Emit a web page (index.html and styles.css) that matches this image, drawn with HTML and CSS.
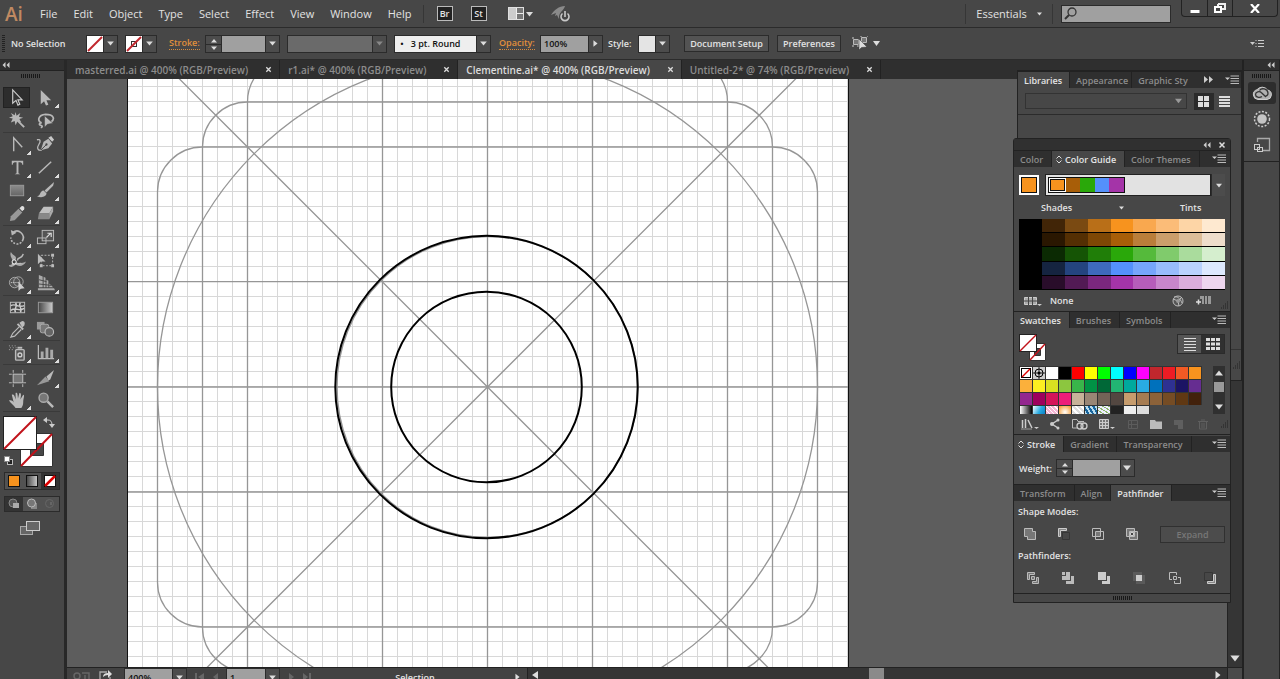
FILE: index.html
```html
<!DOCTYPE html>
<html lang="en">
<head>
<meta charset="utf-8">
<title>Clementine.ai</title>
<link rel="stylesheet" href="styles.css">
</head>
<body>
<svg class="defs" aria-hidden="true">
  <defs>
    <linearGradient id="gr" x1="0" x2="1"><stop offset="0" stop-color="#444"/><stop offset="1" stop-color="#ccc"/></linearGradient>
    <linearGradient id="gv" x1="0" x2="0" y1="0" y2="1"><stop offset="0" stop-color="#8c8c8c"/><stop offset="1" stop-color="#666"/></linearGradient>
    <pattern id="cells" width="15" height="15" patternUnits="userSpaceOnUse" x="127" y="86"><path d="M0 .5H15M.5 0V15" stroke="#d8d8d8" fill="none"/></pattern>
    <symbol id="down" viewBox="0 0 8 6"><path d="M0 .5h8L4 5.5z" fill="currentColor"/></symbol>
    <symbol id="right" viewBox="0 0 6 8"><path d="M.5 0v8L5.5 4z" fill="currentColor"/></symbol>
    <symbol id="spin" viewBox="0 0 16 17"><path d="M5 6.500h6L8 3zM5 10.500h6L8 14z" fill="#ddd"/><path d="M0 8.500h16" stroke="#2b2b2b"/></symbol>
    <symbol id="close" viewBox="0 0 8 8"><path d="M1.500 1.500l5 5M6.500 1.500l-5 5" stroke="#ddd" stroke-width="1.500"/></symbol>
    <symbol id="chev" viewBox="0 0 8 6"><path d="M3.500 0v6L.5 3zM7.500 0v6L4.500 3z" fill="#ccc"/></symbol>
    <symbol id="menu" viewBox="0 0 14 9"><path d="M0 2.500h5L2.500 5z" fill="#ccc"/><path d="M5.500 1H14M5.500 3.500H14M5.500 6H14M5.500 8.500H14" stroke="#bbb"/></symbol>
    <symbol id="updown" viewBox="0 0 6 9"><path d="M.5 3.500L3 1l2.500 2.500M.5 5.500L3 8l2.500-2.500" stroke="#ddd" fill="none"/></symbol>
    <symbol id="grip" viewBox="0 0 19 4"><path d="M.5 0v4M2.500 0v4M4.500 0v4M6.500 0v4M8.500 0v4M10.500 0v4M12.500 0v4M14.500 0v4M16.500 0v4M18.500 0v4" stroke="#181818"/></symbol>
    <symbol id="corner" viewBox="0 0 9 9"><path d="M7 1h1M5 3h1M7 3h1M3 5h1M5 5h1M7 5h1M1 7h1M3 7h1M5 7h1M7 7h1" stroke="#222"/></symbol>
  </defs>
</svg>

<div class="app">
  <header class="menubar">
    <div class="logo">Ai</div>
    <nav class="menus">
      <button>File</button><button>Edit</button><button>Object</button><button>Type</button><button>Select</button><button>Effect</button><button>View</button><button>Window</button><button>Help</button>
    </nav>
    <div class="apps">
      <button class="appbtn">Br</button>
      <button class="appbtn">St</button>
      <button class="plain arrange" aria-label="Arrange documents"><svg width="25" height="14" viewBox="0 0 25 14"><rect x=".5" y=".5" width="15" height="12" fill="#777" stroke="#e0e0e0"/><rect x="1" y="1" width="7" height="11" fill="#ccc"/><path d="M8.500 1v11M8.500 6.500H15" stroke="#eee"/><path d="M18 5h7l-3.500 4.500z" fill="#ddd"/></svg></button>
      <button class="plain" aria-label="GPU performance"><svg width="20" height="18" viewBox="0 0 20 18"><path d="M0 10C3 5 8 1 14 1c-.5 2-2 4-4 6l-2 7-2-4-2 1 1-3z" fill="#8a8a8a"/><path d="M11.500 8.500a4 4 0 1 0 5 0M14 6v6" fill="none" stroke="#474747" stroke-width="4"/><path d="M11.500 8.500a4 4 0 1 0 5 0M14 6v6" fill="none" stroke="#c8c8c8" stroke-width="1.600"/></svg></button>
    </div>
    <button class="workspace-switch">Essentials <svg width="5" height="4"><use href="#down"/></svg></button>
    <label class="search"><svg width="13" height="13" viewBox="0 0 13 13"><circle cx="8" cy="5" r="4" fill="none" stroke="#333" stroke-width="1.300"/><path d="M5 8L1 12" stroke="#333" stroke-width="2"/></svg><input type="search" aria-label="Search"></label>
    <div class="winbtns">
      <button aria-label="Minimize"><svg width="10" height="12" viewBox="0 0 10 12"><rect x=".5" y="8" width="9" height="3" fill="#fff"/></svg></button>
      <button aria-label="Restore"><svg width="12" height="10" viewBox="0 0 12 10"><path d="M4 1h7v5H8M4 1v2" fill="none" stroke="#eee" stroke-width="2"/><rect x="1" y="4" width="6" height="5" fill="#444" stroke="#fff" stroke-width="2"/></svg></button>
      <button aria-label="Close"><svg width="10" height="9" viewBox="0 0 10 9"><path d="M1 0l8 9M9 0L1 9" stroke="#fff" stroke-width="2.200"/></svg></button>
    </div>
  </header>

  <div class="control">
    <span class="vgrip"></span>
    <span class="sel-label">No Selection</span>
    <div class="pair first"><button class="chip" aria-label="Fill"><svg viewBox="0 0 16 16"><path d="M1 15L15 1" stroke="#c1272d" stroke-width="2"/></svg></button><span class="arrow"><svg width="7" height="5"><use href="#down"/></svg></span></div>
    <div class="pair"><button class="chip" aria-label="Stroke colour"><svg viewBox="0 0 16 16"><rect x="5.500" y="5.500" width="5" height="5" fill="#fff" stroke="#333"/><path d="M1 15L15 1" stroke="#c1272d" stroke-width="2"/></svg></button><span class="arrow"><svg width="7" height="5"><use href="#down"/></svg></span></div>
    <label class="link w-stroke" for="sw">Stroke:</label>
    <div class="pair tight"><span class="spin"><svg width="16" height="17"><use href="#spin"/></svg></span><input id="sw" class="f43"><span class="arrow"><svg width="7" height="5"><use href="#down"/></svg></span></div>
    <div class="pair dim"><select class="f84" aria-label="Width profile"><option></option></select><span class="arrow"><svg width="7" height="5"><use href="#down"/></svg></span></div>
    <div class="pair"><select class="f81 white" aria-label="Brush"><option>&nbsp;•&nbsp;&nbsp;&nbsp;3 pt. Round</option></select><span class="arrow"><svg width="7" height="5"><use href="#down"/></svg></span></div>
    <label class="link w-opac" for="op">Opacity:</label>
    <div class="pair tight"><input id="op" class="f47" value="100%"><span class="arrow"><svg width="5" height="7"><use href="#right"/></svg></span></div>
    <span class="w-style">Style:</span>
    <div class="pair tight"><button class="chip grey" aria-label="Style"></button><span class="arrow"><svg width="7" height="5"><use href="#down"/></svg></span></div>
    <button class="push b84">Document Setup</button>
    <button class="push b64">Preferences</button>
    <button class="plain similar" aria-label="Select similar"><svg width="28" height="15" viewBox="0 0 28 15"><path d="M1.500 3.500h5v5h-5zM9.500 1.500h5v5h-5z" fill="#777" stroke="#bbb"/><path d="M0 2h2M0 10h2M8 0h2M15 0h1M5 10h2" stroke="#ccc"/><path d="M7 3v11l2.500-2.500L15 11z" fill="#ddd" stroke="#333" stroke-width=".5"/><path d="M21 5h7l-3.500 5z" fill="#ddd"/></svg></button>
    <button class="plain end" aria-label="Panel options"><svg width="14" height="9" viewBox="0 0 14 9"><path d="M0 3h5L2.500 6z" fill="#ccc"/><path d="M5.500 1.500h1M8 1.500h6M5.500 4.500h1M8 4.500h6M5.500 7.500h1M8 7.500h6" stroke="#ccc"/></svg></button>
  </div>

  <main class="main">
    <aside class="tools">
      <div class="bar"><svg width="8" height="6"><use href="#chev"/></svg></div>
      <svg class="grip" width="19" height="4"><use href="#grip"/></svg>
      <div class="tg">
        <button class="on" aria-label="Selection"><svg viewBox="0 0 20 20"><path d="M6 2v14l3.500-3 2 5 2-1-2-4.500H16z" fill="#333" stroke="#ccc" stroke-width="1.200"/></svg></button>
        <button class="fly" aria-label="Direct selection"><svg viewBox="0 0 20 20"><path d="M5 2v15l3.500-3 2 4.500 2.500-1-2-4.500h5z" fill="#b8b8b8"/></svg></button>
        <button aria-label="Magic wand"><svg viewBox="0 0 20 20"><path d="M8 1l1 4 4-3-1.500 4L16 7l-4 1.500 2 3.500-4-1.500L8 15l-1-4.500L3 12l2-4-4-1 4-1.500L3 2l4 2.500z" fill="#b8b8b8"/><path d="M9 9l8 8" stroke="#b8b8b8" stroke-width="2"/></svg></button>
        <button aria-label="Lasso"><svg viewBox="0 0 20 20"><path d="M6 12.500C1 11 2 4 10 3.500c9 0 10 5 6 8M6 12.500c-3 0-3 2-1 2.500s2 2 0 2.500" fill="none" stroke="#b8b8b8" stroke-width="1.800"/><path d="M9 5v12l3-3 6-1z" fill="#bbb" stroke="#474747" stroke-width=".6"/></svg></button>
      </div>
      <div class="tg">
        <button class="fly" aria-label="Anchor point"><svg viewBox="0 0 20 20"><path d="M6 17V3l9 10" fill="none" stroke="#b8b8b8" stroke-width="1.500"/></svg></button>
        <button aria-label="Curvature pen"><svg viewBox="0 0 20 20"><path d="M1 5c4-1 4 2 2 5s-2 7 3 6" fill="none" stroke="#b8b8b8" stroke-width="1.400"/><path d="M5 16l3-9 5-3 4 5-4 5z" fill="#b8b8b8"/><path d="M13 3l3-2 3 4-2 2z" fill="#c8c8c8"/><path d="M5 16l6-6" stroke="#444"/><circle cx="11" cy="10" r="1.200" fill="#444"/></svg></button>
        <button class="fly" aria-label="Type"><svg viewBox="0 0 20 20"><path d="M4 3h12v4h-1c0-2-1-2.500-4-2.500V16l2 1H7l2-1V4.500C6 4.500 5 5 5 7H4z" fill="#b8b8b8"/></svg></button>
        <button class="fly" aria-label="Line segment"><svg viewBox="0 0 20 20"><path d="M3 16L16 4" stroke="#b8b8b8" stroke-width="1.600"/></svg></button>
        <button class="fly" aria-label="Rectangle"><svg viewBox="0 0 20 20"><rect x="2.500" y="4.500" width="14" height="11" fill="url(#gv)" stroke="#999"/></svg></button>
        <button class="fly" aria-label="Paintbrush"><svg viewBox="0 0 20 20"><path d="M19 1l-1 4-7 7-2-2z" fill="#b8b8b8"/><path d="M8 10l3 3c0 4-6 5-10 3 4 0 3-6 7-6z" fill="#b8b8b8"/></svg></button>
        <button class="fly" aria-label="Pencil"><svg viewBox="0 0 20 20"><path d="M2 18l1-5 8-8 4 4-8 8z" fill="#999"/><path d="M12 4.500l2-2c2-1 4 1 3 3l-2 2z" fill="#ddd"/></svg></button>
        <button class="fly" aria-label="Eraser"><svg viewBox="0 0 20 20"><path d="M8 3h10l-4 7H3z" fill="#c0c0c0"/><path d="M3 10h11v6H2z" fill="#888"/><path d="M14 10l4-7v5l-4 8z" fill="#aaa"/></svg></button>
      </div>
      <div class="tg">
        <button class="fly" aria-label="Rotate"><svg viewBox="0 0 20 20"><path d="M5 5c6-5 14 2 10 9" fill="none" stroke="#b8b8b8" stroke-width="1.700"/><path d="M14 15c-4 4-11 1-11-5" fill="none" stroke="#b8b8b8" stroke-width="1.700" stroke-dasharray="2 1.500"/><path d="M3 2l1 6 5-3z" fill="#b8b8b8"/></svg></button>
        <button class="fly" aria-label="Scale"><svg viewBox="0 0 20 20"><rect x="6.500" y="2.500" width="12" height="11" fill="#555" stroke="#bbb"/><rect x="1.500" y="10.500" width="9" height="6" fill="none" stroke="#bbb"/><path d="M11 10l4-4M12 5.500h4v4" fill="none" stroke="#ddd" stroke-width="1.200"/></svg></button>
        <button class="fly" aria-label="Width"><svg viewBox="0 0 20 20"><path d="M3 1c2 4 7 4 5 8s6 5 11 2c-2 5-8 6-11 3-3 4-7 3-7 1 2-1 3 0 4-3S1 6 3 1z" fill="#aaa"/><path d="M10 10c0-5 4 0 6-7M4 14l10-1" fill="none" stroke="#bbb" stroke-width="1.500"/><circle cx="6.500" cy="11.500" r="2.200" fill="#444" stroke="#fff"/></svg></button>
        <button aria-label="Free transform"><svg viewBox="0 0 20 20"><rect x="5.500" y="4.500" width="12" height="11" fill="none" stroke="#bbb" stroke-dasharray="2 1.500"/><path d="M2 3v11l3-3h5z" fill="#bbb"/><path d="M4 14h3v3H4zM16 3h3v3h-3zM16 14h3v3h-3z" fill="#bbb"/></svg></button>
        <button class="fly" aria-label="Shape builder"><svg viewBox="0 0 20 20"><circle cx="7" cy="9" r="5.500" fill="#555" stroke="#aaa"/><circle cx="11" cy="8" r="5" fill="none" stroke="#aaa"/><path d="M3 9h10" stroke="#ddd" stroke-dasharray="1 1"/><path d="M11 8v10l2.500-2.500 4-.5z" fill="#ccc"/></svg></button>
        <button class="fly" aria-label="Perspective grid"><svg viewBox="0 0 20 20"><path d="M3 1l4 1.500V14H3zM8 3l2 1v10H8zM11 6l2 1v7h-2zM14 10l4 4h-4zM2 15h17l1 2H2z" fill="#aaa"/><path d="M3 6l8 2M3 10.500l13 1.500" stroke="#474747"/></svg></button>
      </div>
      <div class="tg short">
        <button aria-label="Mesh"><svg viewBox="0 0 20 20"><rect x="2.500" y="4.500" width="15" height="11" fill="none" stroke="#bbb"/><path d="M3 8c5-3 8 3 14 0M3 13c6-4 8 2 14-2M8 5c3 4-3 7 0 10M13 5c-3 4 3 6 0 10" fill="none" stroke="#ccc" stroke-width="1.500"/></svg></button>
        <button aria-label="Gradient"><svg viewBox="0 0 20 20"><rect x="2.500" y="4.500" width="15" height="11" fill="url(#gr)" stroke="#999"/></svg></button>
        <button class="fly" aria-label="Eyedropper"><svg viewBox="0 0 20 20"><path d="M12 3l3-2c3 0 3 3 2 5l-2 2z" fill="#bbb"/><path d="M10 4l6 6" stroke="#bbb" stroke-width="2"/><path d="M12 7l-7 7-2 4 4-1 7-7" fill="none" stroke="#bbb" stroke-width="1.200"/></svg></button>
        <button aria-label="Blend"><svg viewBox="0 0 20 20"><rect x="1" y="2" width="8" height="8" fill="#999"/><rect x="4.500" y="4.500" width="9" height="9" rx="2" fill="#777" stroke="#aaa"/><circle cx="14" cy="12.500" r="4.500" fill="#666" stroke="#bbb" stroke-width="1.200"/></svg></button>
      </div>
      <div class="tg">
        <button class="fly" aria-label="Symbol sprayer"><svg viewBox="0 0 20 20"><rect x="8" y="7" width="9" height="11" rx="1" fill="#555" stroke="#bbb" stroke-width="1.500"/><path d="M10 4h5v2h-5z" fill="#bbb"/><circle cx="12.500" cy="12.500" r="2" fill="none" stroke="#ccc" stroke-width="1.500"/><path d="M1 3h1M4 3h1M7 3h1M2 5h1M5 5h1M8 5h1M1 7h1M4 7h1" stroke="#aaa"/></svg></button>
        <button class="fly" aria-label="Column graph"><svg viewBox="0 0 20 20"><path d="M2.500 2v14.500H19" fill="none" stroke="#bbb" stroke-width="1.300"/><path d="M5 9h3v7H5zM10 5h3v11h-3zM15 7h3v9h-3z" fill="#aaa"/></svg></button>
      </div>
      <div class="tg short last">
        <button aria-label="Artboard"><svg viewBox="0 0 20 20"><rect x="5" y="5" width="11" height="10" fill="#777"/><path d="M1 5.500h18M1 14.500h18M5.500 1v18M15.500 1v18" stroke="#bbb" stroke-dasharray="3 1 10 1 3"/></svg></button>
        <button class="fly" aria-label="Slice"><svg viewBox="0 0 20 20"><path d="M11 8l8-7-4 10-2 1z" fill="#bbb"/><path d="M1 17l9-9 4 5z" fill="#999"/></svg></button>
        <button class="fly" aria-label="Hand"><svg viewBox="0 0 20 20"><path d="M8 18c-2-3-5-5-7-8 2-1 4 0 5 2L4 4c2-1 3 1 4 5V2c2-1 2 1 2.500 6L12 2c2 0 2 2 1 7l3-5c2 0 0 4 0 8 0 3-1 4-2 6z" fill="#bbb"/></svg></button>
        <button aria-label="Zoom"><svg viewBox="0 0 20 20"><circle cx="8" cy="7" r="4.800" fill="#777" stroke="#aaa" stroke-width="1.500"/><path d="M12 11l6 6" stroke="#bbb" stroke-width="2.500"/></svg></button>
      </div>
      <svg class="fillstroke" width="56" height="54" viewBox="0 0 56 54"><path d="M17.500 19.500h32v33h-32zM27.500 29.500v12h13v-12z" fill="#fff" fill-rule="evenodd" stroke="#333"/><path d="M18 52L49 20" stroke="#c1121a" stroke-width="2"/><rect x=".5" y="2.500" width="33" height="33" fill="#fff" stroke="#222"/><path d="M1 35L33 3" stroke="#c1121a" stroke-width="2"/><path d="M43 6h2q4 0 4 5" fill="none" stroke="#ccc"/><path d="M44 3v6l-4-3zM46 10h6l-3 4z" fill="#ccc"/><rect x="4.500" y="45.500" width="5" height="5" fill="#222" stroke="#bbb"/><rect x="1.500" y="42.500" width="5" height="5" fill="#fff" stroke="#888"/></svg>
      <div class="modes tall">
        <button aria-label="Color"><svg viewBox="0 0 14 14"><rect x="1.500" y="1.500" width="11" height="11" fill="#f7931e" stroke="#111"/></svg></button>
        <button aria-label="Gradient fill"><svg viewBox="0 0 14 14"><rect x="1.500" y="1.500" width="11" height="11" fill="url(#gr)" stroke="#111"/></svg></button>
        <button class="on" aria-label="None"><svg viewBox="0 0 14 14"><rect x="1.500" y="1.500" width="11" height="11" fill="#fff" stroke="#111"/><path d="M2 12L12 2" stroke="#d00" stroke-width="2.500"/></svg></button>
      </div>
      <div class="modes">
        <button class="on" aria-label="Draw normal"><svg viewBox="0 0 14 14"><circle cx="6" cy="6" r="4" fill="#555" stroke="#888"/><rect x="6" y="6" width="6" height="5" fill="#aaa"/></svg></button>
        <button aria-label="Draw behind"><svg viewBox="0 0 14 14"><rect x="6" y="6" width="6" height="6" fill="#888"/><circle cx="6.500" cy="6" r="4" fill="#777" stroke="#bbb"/></svg></button>
        <button aria-label="Draw inside"><svg viewBox="0 0 14 14"><circle cx="6.500" cy="6.500" r="4" fill="none" stroke="#666"/><path d="M7 5h2v3H7z" fill="#666"/></svg></button>
      </div>
      <button class="plain screenmode" aria-label="Screen mode"><svg width="20" height="16" viewBox="0 0 20 16"><rect x=".5" y="6.500" width="12" height="8" fill="#666" stroke="#aaa"/><rect x="6.500" y="1.500" width="13" height="9" fill="#666" stroke="#ccc"/></svg></button>
    </aside>

    <section class="work">
      <div class="doctabs">
        <div class="doc"><button>masterred.ai @ 400% (RGB/Preview)</button><button class="x" aria-label="Close masterred.ai"><svg width="7" height="7"><use href="#close"/></svg></button></div>
        <div class="doc"><button>r1.ai* @ 400% (RGB/Preview)</button><button class="x" aria-label="Close r1.ai"><svg width="7" height="7"><use href="#close"/></svg></button></div>
        <div class="doc on"><button>Clementine.ai* @ 400% (RGB/Preview)</button><button class="x" aria-label="Close Clementine.ai"><svg width="7" height="7"><use href="#close"/></svg></button></div>
        <div class="doc"><button>Untitled-2* @ 74% (RGB/Preview)</button><button class="x" aria-label="Close Untitled-2"><svg width="7" height="7"><use href="#close"/></svg></button></div>
      </div>
      <div class="view">
        <svg class="canvas" aria-label="Artboard">
          <g transform="translate(-67 -79)">
            <rect x="127" y="-200" width="721.500" height="1180" fill="#fff"/>
            <rect x="128" y="-200" width="720" height="1180" fill="url(#cells)"/>
            <g fill="none" stroke="#969696" stroke-width="1.300">
              <path d="M128 281.700H848M128 387H848M128 492H848M382.500 0V900M487.500 0V900M592.500 0V900"/>
              <path d="M87.500 -13L887.500 787M887.500 -13L87.500 787"/>
              <rect x="157.500" y="147" width="660" height="480" rx="45"/>
              <rect x="202.500" y="102" width="570" height="570" rx="45"/>
              <rect x="247.500" y="57" width="480" height="660" rx="45"/>
              <circle cx="487.500" cy="387" r="330"/>
              <circle cx="487.500" cy="387" r="150.500"/>
            </g>
            <path d="M127.500 0V900M848.500 0V900" stroke="#111"/>
            <g fill="none" stroke="#000" stroke-width="2">
              <circle cx="486.500" cy="387" r="151.200"/>
              <circle cx="486.500" cy="387" r="95.300"/>
            </g>
          </g>
        </svg>
        <div class="vscroll"><svg width="10" height="7"><use href="#down"/></svg></div>
      </div>
      <div class="status">
        <div class="statusbox">
          <svg class="si" width="42" height="12" viewBox="0 0 42 12"><circle cx="4" cy="8" r="3" fill="none" stroke="#666" stroke-width="1.500"/><path d="M9 5h7v6M12 7v4" fill="none" stroke="#666" stroke-width="1.500"/><path d="M34 4h-7v8h10V9" fill="none" stroke="#aaa" stroke-width="1.300"/><path d="M30 9q0-4 5-4V2l4 4-4 4V7q-3 0-5 2z" fill="#ddd"/></svg>
          <div class="pair"><input class="f47" value="400%" aria-label="Zoom level"><span class="arrow"><svg width="7" height="5"><use href="#down"/></svg></span></div>
          <svg class="nav" width="26" height="8" viewBox="0 0 26 8"><path d="M1 0h2v8H1zM10 0v8L4 4zM24 0v8l-5-4z" fill="#666"/></svg>
          <div class="pair"><input class="f38" value="1" aria-label="Artboard number"><span class="arrow"><svg width="7" height="5"><use href="#down"/></svg></span></div>
          <svg class="nav" width="26" height="8" viewBox="0 0 26 8"><path d="M2 0v8l5-4zM16 0v8l5-4zM22 0h2v8h-2z" fill="#666"/></svg>
          <span class="statustext">Selection</span>
          <span class="more"><svg width="5" height="8"><use href="#right"/></svg></span>
        </div>
        <div class="hscroll"><svg width="6" height="8" viewBox="0 0 6 8"><path d="M6 0v8L0 4z" fill="#ddd"/></svg><span class="thumb"></span><svg width="6" height="8"><use href="#right"/></svg></div>
        <span class="sizebox"></span>
      </div>

      <section class="panel libraries">
        <div class="tabs">
          <button class="on">Libraries</button><button>Appearance</button><button class="last">Graphic Sty</button>
          <svg class="more2" width="9" height="7" viewBox="0 0 9 7"><path d="M0 0v7l4-3.500zM5 0v7l4-3.500z" fill="#ccc"/></svg><svg class="pm" width="14" height="9"><use href="#menu"/></svg>
        </div>
        <div class="librow">
          <div class="pair libsel"><select aria-label="Library"><option></option></select><span class="noarrow"><svg width="7" height="6"><use href="#down"/></svg></span></div>
          <button class="view-b on" aria-label="Grid view"><svg width="12" height="11" viewBox="0 0 12 11"><path d="M0 0h5v5H0zM6 0h5v5H6zM0 6h5v5H0zM6 6h5v5H6z" fill="#ddd"/></svg></button>
          <button class="view-b" aria-label="List view"><svg width="11" height="11" viewBox="0 0 11 11"><path d="M0 1h11M0 4h11M0 7h11M0 10h11" stroke="#ddd" stroke-width="2"/></svg></button>
        </div>
        <div class="libfoot"><svg width="9" height="9"><use href="#corner"/></svg></div>
      </section>

      <section class="panel float">
        <div class="titlebar"><svg width="8" height="6"><use href="#chev"/></svg><button class="x" aria-label="Close panels"><svg width="8" height="8"><use href="#close"/></svg></button></div>
        <div class="tabs"><button>Color</button><button class="on ud"><svg width="6" height="9"><use href="#updown"/></svg>Color Guide</button><button>Color Themes</button><svg class="pm" width="14" height="9"><use href="#menu"/></svg></div>
        <div class="guide">
          <div class="harmony">
            <button class="base" aria-label="Base colour"></button>
            <div class="rule"><div class="rulecolors" id="rule"></div></div>
            <span class="arrow"><svg width="6" height="5"><use href="#down"/></svg></span>
          </div>
          <div class="caps"><span>Shades</span><svg width="5" height="4"><use href="#down"/></svg><span>Tints</span></div>
          <div class="shades" id="shades"></div>
          <div class="gfoot"><svg width="18" height="10" viewBox="0 0 18 10"><path d="M.5 1.500h12v7H.5z" fill="#aaa" stroke="#ccc"/><path d="M4.500 1v8M8.500 1v8M0 5h13" stroke="#444"/><path d="M13 8h5l-2.500 2z" fill="#ccc"/></svg><span>None</span>
            <svg class="push-r" width="12" height="12" viewBox="0 0 12 12"><circle cx="6" cy="6" r="5" fill="#555" stroke="#bbb"/><path d="M6 6L1 4M6 6l4-4M6 6l1 5M2 2c3-1 6 1 8 6" fill="none" stroke="#bbb"/><circle cx="6" cy="6" r="2" fill="#999"/></svg>
            <svg class="save" width="16" height="11" viewBox="0 0 16 11"><path d="M0 7h5M2.500 4.500v5" stroke="#ddd" stroke-width="1.500"/><path d="M4 1h11v8H6V4H4z" fill="#999"/><path d="M8.500 1v8M11.500 1v8" stroke="#444"/></svg>
            <svg class="cg" width="9" height="9"><use href="#corner"/></svg></div>
        </div>

        <div class="tabs"><button class="on">Swatches</button><button>Brushes</button><button>Symbols</button><svg class="pm" width="14" height="9"><use href="#menu"/></svg></div>
        <div class="swbody">
          <div class="swtop">
            <svg width="28" height="28" viewBox="0 0 28 28"><path d="M10.500 9.500h16v17h-16zM15.500 14.500v7h6v-7z" fill="#fff" fill-rule="evenodd" stroke="#333"/><path d="M11 26L26 10" stroke="#c1121a" stroke-width="1.500"/><rect x=".5" y=".5" width="17" height="17" fill="#fff" stroke="#222"/><path d="M1 17L17 1" stroke="#c1121a" stroke-width="1.500"/></svg>
            <div class="swview"><button aria-label="List"><svg width="12" height="14" viewBox="0 0 12 14"><path d="M0 1.500h12M0 4.500h12M0 7.500h12M0 10.500h12M0 13.500h12" stroke="#ddd"/></svg></button><button class="on" aria-label="Thumbnails"><svg width="14" height="14" viewBox="0 0 14 14"><path d="M0 1h4v3H0zM5 1h4v3H5zM10 1h4v3h-4zM0 5.500h4v3H0zM5 5.500h4v3H5zM10 5.500h4v3h-4zM0 10h4v3H0zM5 10h4v3H5zM10 10h4v3h-4z" fill="#ddd"/></svg></button></div>
          </div>
          <div class="swlist"><div class="swatches" id="swatches"></div>
            <div class="swscroll"><svg width="8" height="6" viewBox="0 0 8 6"><path d="M0 5.500h8L4 .5z" fill="#ddd"/></svg><span></span><svg width="8" height="6"><use href="#down"/></svg></div></div>
          <div class="swfoot">
            <svg width="18" height="12" viewBox="0 0 18 12"><path d="M1.500 2v8M4.500 1v9M7 2l4 8" stroke="#ccc" stroke-width="1.500"/><path d="M0 11h11" stroke="#999"/><path d="M13 9h5l-2.500 2z" fill="#ccc"/></svg>
            <svg width="10" height="12" viewBox="0 0 10 12"><path d="M8 2L2 6l6 4" fill="none" stroke="#ccc" stroke-width="1.500"/><circle cx="8" cy="2" r="1.500" fill="#ccc"/><circle cx="2" cy="6" r="2" fill="#ccc"/><circle cx="8" cy="10" r="1.500" fill="#ccc"/></svg>
            <svg width="16" height="12" viewBox="0 0 16 12"><path d="M5 10H.5V1.500H5l1 2h6" fill="none" stroke="#bbb"/><circle cx="8" cy="8" r="3" fill="none" stroke="#ccc" stroke-width="1.300"/><circle cx="12" cy="8" r="3" fill="none" stroke="#ccc" stroke-width="1.300"/></svg>
            <svg width="16" height="12" viewBox="0 0 16 12"><path d="M.5 1.500h9v9h-9zM3.500 1v10M6.500 1v10M0 4.500h10M0 7.500h10" fill="#777" stroke="#ccc"/><path d="M11 9h5l-2.500 2z" fill="#ccc"/></svg>
            <svg width="12" height="12" viewBox="0 0 12 12"><path d="M1.500 2.500h9v8h-9zM4.500 2v9M1 6.500h9" fill="none" stroke="#5c5c5c"/></svg>
            <svg width="12" height="12" viewBox="0 0 12 12"><path d="M0 2h5l1 1.500h6V11H0z" fill="#bbb"/></svg>
            <svg width="12" height="12" viewBox="0 0 12 12"><path d="M1 2h9v9H5V7H1z" fill="#5f5f5f"/></svg>
            <svg width="12" height="12" viewBox="0 0 12 12"><path d="M1 3.500h10M4 2h4M2.500 4v7h7V4M5 5v5M7 5v5" fill="none" stroke="#5f5f5f"/></svg>
            <svg width="9" height="9"><use href="#corner"/></svg>
          </div>
        </div>

        <div class="tabs"><button class="on ud"><svg width="6" height="9"><use href="#updown"/></svg>Stroke</button><button>Gradient</button><button>Transparency</button><svg class="pm" width="14" height="9"><use href="#menu"/></svg></div>
        <div class="weight"><label for="wt">Weight:</label><div class="pair"><span class="spin"><svg width="16" height="17"><use href="#spin"/></svg></span><input id="wt" class="f47"><span class="arrow"><svg width="8" height="6"><use href="#down"/></svg></span></div></div>

        <div class="tabs"><button>Transform</button><button>Align</button><button class="on">Pathfinder</button><svg class="pm" width="14" height="9"><use href="#menu"/></svg></div>
        <div class="path">
          <span>Shape Modes:</span>
          <div class="prow four">
            <button aria-label="Unite"><svg viewBox="0 0 14 14"><path d="M1.500 1.500h8v3h3v8h-8v-3h-3z" fill="#777" stroke="#bbb"/></svg></button>
            <button aria-label="Minus front"><svg viewBox="0 0 14 14"><path d="M1.500 1.500h8v2h-6v6h-2z" fill="#888" stroke="#ccc"/><path d="M5.500 5.500h7v7h-7z" fill="none" stroke="#363636"/></svg></button>
            <button aria-label="Intersect"><svg viewBox="0 0 14 14"><path d="M1.500 1.500h8v8h-8zM4.500 4.500h8v8h-8z" fill="none" stroke="#bbb"/><path d="M5 5h4v4H5z" fill="#777"/></svg></button>
            <button aria-label="Exclude"><svg viewBox="0 0 14 14"><path d="M1.500 1.500h8v8h-8zM4.500 4.500h8v8h-8z" fill="#777" stroke="#bbb"/><path d="M5.500 5.500h3v3h-3z" fill="#444" stroke="#ccc"/></svg></button>
            <button class="push expand" disabled>Expand</button>
          </div>
          <span>Pathfinders:</span>
          <div class="prow six">
            <button aria-label="Divide"><svg viewBox="0 0 14 14"><path d="M1.500 1.500h7v2h-5v5h-2zM5.500 5.500h3v3h-3zM12.500 6.500h-2v4h-4v2h6z" fill="#777" stroke="#bbb"/></svg></button>
            <button aria-label="Trim"><svg viewBox="0 0 14 14"><path d="M1 1h3v3H1zM5 1h4v8H1V5h4zM10 5h3v8H5v-3h5z" fill="#bbb"/></svg></button>
            <button aria-label="Merge"><svg viewBox="0 0 14 14"><path d="M1 1h8v8H1zM10 5h3v8H5v-3h5z" fill="#ccc"/></svg></button>
            <button aria-label="Crop"><svg viewBox="0 0 14 14"><path d="M1 1h9v3H4v6H1zM10 4h3v9H4v-3h6z" fill="#5a5a5a"/><path d="M4 4h6v6H4z" fill="#ccc"/></svg></button>
            <button aria-label="Outline"><svg viewBox="0 0 14 14"><path d="M4 8.500H1.500v-7h7V4M5.500 5.500h3v3h-3zM10 6.500h2.500v6h-6V10" fill="none" stroke="#bbb"/></svg></button>
            <button aria-label="Minus back"><svg viewBox="0 0 14 14"><path d="M1.500 1.500h8v8h-8z" fill="none" stroke="#363636"/><path d="M10.500 3.500h2v9h-8v-2h6z" fill="#888" stroke="#ccc"/></svg></button>
          </div>
        </div>
        <div class="floatfoot"><svg width="19" height="4"><use href="#grip"/></svg></div>
      </section>
    </section>

    <aside class="dock">
      <div class="bar"><svg width="8" height="6"><use href="#chev"/></svg></div>
      <div class="dockgroup">
        <svg width="19" height="4"><use href="#grip"/></svg>
        <button class="on" aria-label="Creative Cloud"><svg width="20" height="16" viewBox="0 0 20 16"><path d="M6 14.500a5 5 0 0 1-1-9.800 6.500 6.500 0 0 1 10.500.3 4.800 4.800 0 0 1-.5 9.500z" fill="#b0b0b0" stroke="#ccc"/><path d="M10 11.500c-2.500 1.800-6.500.8-6.500-2s4-3.800 6-1.800l4.500 4.300M7.500 5.500c2-3 8-2 8.500 2.500.2 2.500-2 3.800-4 2.500" fill="none" stroke="#333" stroke-width="1.300"/></svg></button>
        <button aria-label="Appearance"><svg width="18" height="18" viewBox="0 0 18 18"><circle cx="9" cy="9" r="7.500" fill="none" stroke="#ccc" stroke-width="1.500" stroke-dasharray="2 1.500"/><circle cx="9" cy="9" r="4.800" fill="#c4c4c4"/></svg></button>
        <button aria-label="Asset export"><svg width="18" height="16" viewBox="0 0 18 16"><path d="M4.500 5V1.500h12v12H10" fill="none" stroke="#aaa" stroke-width="1.300"/><rect x="1.500" y="7.500" width="5" height="5" fill="#474747" stroke="#ccc"/><rect x="4.500" y="10.500" width="5" height="4" fill="none" stroke="#ccc"/></svg></button>
      </div>
    </aside>
  </main>
</div>
<script src="script.js"></script>
</body>
</html>
```
FILE: styles.css
```css
* { box-sizing: border-box; }
html, body { margin: 0; height: 100%; overflow: hidden; background: #474747; }
body, button, input, select { font-family: "Open Sans", "Noto Sans", sans-serif; font-size: 9px; font-weight: 600; color: #e2e2e2; }
button { margin: 0; padding: 0; border: 0; background: none; white-space: nowrap; display: flex; align-items: center; justify-content: center; }
input, select { margin: 0; padding: 0 3px; border: 0; border-radius: 0; min-width: 0; appearance: none; outline: none; color: #111; background: #a0a0a0; height: 100%; }
svg { display: block; flex: none; color: #ddd; }
.defs { position: absolute; width: 0; height: 0; }
.app { height: 100vh; display: flex; flex-direction: column; }

.menubar { flex: none; height: 28px; display: flex; align-items: center; border-bottom: 1px solid #2b2b2b; padding-right: 2px; }
.logo { width: 40px; padding-left: 5px; font-size: 19px; line-height: 24px; color: #c08a62; }
.menus { display: flex; gap: 16px; }
.menus button { font-size: 11px; font-weight: 400; }
.apps { display: flex; align-items: center; gap: 18px; margin-left: 11px; padding-left: 13px; border-left: 1px solid #363636; }
.appbtn { width: 16px; height: 15px; border: 1px solid #bbb; background: #222; }
.arrange { margin-left: 3px; }
.workspace-switch { margin-left: auto; width: 88px; height: 20px; gap: 10px; border: solid #363636; border-width: 0 1px; font-size: 11px; font-weight: 400; }
.search { margin-left: 8px; margin-right: 10px; width: 110px; height: 18px; display: flex; align-items: center; background: #a0a0a0; border: 1px solid #2b2b2b; padding-left: 2px; }
.search input { flex: 1; background: none; }
.winbtns { align-self: flex-start; display: flex; height: 17px; border: 1px solid #222; border-top: 0; border-radius: 0 0 4px 4px; }
.winbtns button { width: 25px; }
.winbtns button + button { border-left: 1px solid #222; }
.winbtns button:last-child { width: 45px; }

.control { flex: none; height: 32px; display: flex; align-items: center; padding-right: 16px; border-bottom: 1px solid #2b2b2b; white-space: nowrap; }
.vgrip { width: 3px; height: 18px; margin-left: 2px; background: repeating-linear-gradient(#222 0 1px, transparent 1px 2px); }
.sel-label { width: 75px; margin-left: 6px; }
.pair { display: flex; height: 18px; margin-left: 7px; border: 1px solid #2b2b2b; background: #a0a0a0; }
.pair.first { margin-left: 0; }
.pair.tight { margin-left: 0; }
.chip { width: 16px; height: 16px; background: #fff; }
.chip svg { width: 16px; height: 16px; }
.chip.grey { background: #e4e4e4; }
.arrow { width: 14px; display: flex; align-items: center; justify-content: center; background: #4c4c4c; border-left: 1px solid #2b2b2b; }
.spin { width: 16px; background: #4c4c4c; border-right: 1px solid #2b2b2b; overflow: hidden; }
.link { color: #e08f3c; line-height: 12px; border-bottom: 1px dotted #d98a3c; }
.w-stroke { margin-left: 12px; margin-right: 5px; width: 31px; }
.w-opac { margin-left: 8px; margin-right: 5px; width: 36px; }
.w-style { margin: 0 6px 0 5px; width: 24px; }
.f38 { width: 38px; }
.f43 { width: 43px; }
.f47 { width: 47px; }
.f81 { width: 81px; }
.f84 { width: 84px; }
.white { background: #eee; }
.dim, .dim select { background: #6a6a6a; }
.dim svg { color: #888; }
.push { height: 17px; border: 1px solid #2b2b2b; background: #535353; }
.b84 { width: 85px; margin-left: 14px; }
.b64 { width: 64px; margin-left: 8px; }
.similar { margin-left: 11px; }
.end { margin-left: auto; }

.main { flex: 1; min-height: 0; display: flex; }
.bar { height: 11px; flex: none; background: #303030; border-bottom: 1px solid #222; display: flex; align-items: center; }
.tools { flex: none; width: 67px; border-right: 3px solid #282828; background: #474747; display: flex; flex-direction: column; }
.tools .bar { padding-left: 2px; }
.tools .grip { margin: 3px 0 8px 21px; }
.tg { display: grid; grid-template-columns: 28px 28px; grid-auto-rows: 23px; margin: 0 4px 0 3px; border-bottom: 1px solid #3a3a3a; }
.tg.short { grid-auto-rows: 22px; }
.tg.last { padding-top: 2px; }
.tg button { position: relative; }
.tg svg { width: 19px; height: 19px; }
.tg .on { background: #2d2d2d; border: 1px solid #222; width: 27px; height: 21px; align-self: center; }
.fly::after { content: ""; position: absolute; right: 0; bottom: 1px; width: 4px; height: 4px; background: linear-gradient(135deg, transparent 50%, #ddd 50%); }
.fillstroke { margin: 2px 0 0 3px; }
.modes { display: flex; width: 56px; height: 16px; margin: 6px 0 0 4px; border: 1px solid #2b2b2b; background: #525252; }
.modes.tall { height: 18px; margin-top: 4px; }
.modes button { flex: 1; }
.modes button.on { background: #333; }
.modes svg { width: 14px; height: 14px; }
.screenmode { margin-top: 8px; align-self: flex-start; margin-left: 20px; }

.work { flex: 1; min-width: 0; display: flex; flex-direction: column; position: relative; background: #2f2f2f; }
.doctabs { flex: none; height: 19px; display: flex; overflow: hidden; background: #2f2f2f; }
.doc { display: flex; align-items: center; padding: 0 7px 0 8px; gap: 17px; border-right: 1px solid #222; }
.doc button { color: #8c8c8c; font-size: 10px; }
.doc.on { background: #474747; }
.doc.on button { color: #dcdcdc; }
.view { flex: 1; min-height: 0; display: flex; background: #5d5d5d; }
.canvas { flex: 1; min-width: 0; height: 100%; }
.vscroll { width: 15px; background: #353535; border-left: 1px solid #222; display: flex; align-items: flex-end; justify-content: center; padding-bottom: 5px; }
.status { flex: none; height: 12px; display: flex; align-items: flex-start; overflow: hidden; background: #353535; border-top: 1px solid #222; }
.statusbox { flex: none; width: 461px; height: 18px; display: flex; align-items: center; background: #424242; border-right: 1px solid #222; }
.si { margin-left: 6px; align-self: flex-start; }
.statusbox .pair { margin-left: 9px; }
.nav { margin-left: 7px; }
.statusbox .nav + .pair { margin-left: 6px; }
.statustext { flex: 1; text-align: center; padding-left: 10px; }
.more { width: 20px; display: flex; justify-content: center; }
.hscroll { flex: 1; height: 14px; display: flex; align-items: center; justify-content: space-between; padding: 0 6px 0 4px; }
.thumb { width: 15px; height: 14px; background: #8a8a8a; }
.sizebox { width: 15px; height: 18px; background: #4a4a4a; border-left: 1px solid #222; }

.panel { position: absolute; background: #474747; border: 1px solid #222; display: flex; flex-direction: column; }
.tabs { flex: none; height: 16px; display: flex; background: #2f2f2f; }
.tabs button { padding: 0 8px 0 6px; color: #8c8c8c; border-right: 1px solid #222; gap: 3px; }
.tabs button.on { background: #474747; color: #e4e4e4; }
.tabs button.ud { padding-left: 4px; }
.tabs .pm { margin: 3px 4px 0 auto; }
.libraries { top: 10px; right: 0; width: 225px; height: 311px; border-top-width: 2px; }
.libraries .tabs button { padding: 0 3px 0 6px; }
.libraries .tabs button.on { padding-right: 7px; }
.libraries .tabs .last { border: 0; }
.more2 { margin: 4px 0 0 auto; }
.tabs .more2 + .pm { margin: 3px 2px 0 12px; }
.librow { height: 27px; display: flex; align-items: center; padding: 0 7px; border-bottom: 1px solid #2b2b2b; }
.libsel { flex: 1; height: 16px; margin: 0 7px 0 0; background: #474747; border-color: #333; }
.libsel select { flex: 1; background: none; }
.noarrow { width: 15px; display: flex; align-items: center; justify-content: center; }
.noarrow svg { color: #999; }
.view-b { width: 20px; height: 17px; }
.view-b.on { background: #2b2b2b; }
.libfoot { margin-top: auto; height: 31px; border-top: 1px solid #333; display: flex; justify-content: flex-end; align-items: center; }

.float { top: 78px; right: 11px; width: 218px; border-radius: 3px 3px 0 0; }
.titlebar { height: 12px; display: flex; align-items: center; justify-content: flex-end; gap: 7px; padding-right: 4px; background: #303030; border-bottom: 1px solid #222; }
.guide { height: 145px; padding: 7px 5px 0; border-bottom: 1px solid #222; }
.harmony { display: flex; height: 22px; }
.base { width: 20px; height: 20px; margin: 1px 6px 0 0; background: #f7931e; border: 2px solid #fff; outline: 1px solid #111; outline-offset: -3px; }
.rule { flex: 1; background: #e2e2e2; border: 1px solid #222; padding: 2px; }
.rulecolors { display: flex; width: 77px; height: 16px; border: 1px solid #111; }
.rulecolors span { flex: 1; }
.rulecolors span:first-child { border: 1px solid #fff; outline: 1px solid #111; outline-offset: -2px; }
.caps { height: 23px; display: grid; grid-template-columns: 1fr 1fr 1fr; align-items: center; justify-items: center; }
.caps span:first-child { justify-self: start; padding-left: 22px; }
.shades { height: 71px; display: grid; grid-template-columns: repeat(9, 1fr); gap: 1px 0; background: #000; border-bottom: 1px solid #000; }
.gfoot { height: 20px; display: flex; align-items: center; gap: 8px; padding: 1px 0 0 5px; margin-right: -4px; }
.push-r { margin-left: auto; }
.save { margin-left: 4px; }
.gfoot .cg { align-self: flex-end; }

.swbody { height: 107px; padding: 6px 5px 0; border-bottom: 1px solid #222; margin-bottom: 1px; }
.swtop { height: 32px; display: flex; justify-content: space-between; }
.swview { display: flex; height: 20px; border: 1px solid #2b2b2b; }
.swview button { width: 23px; background: #555; }
.swview .on { background: #303030; }
.swlist { height: 48px; display: flex; justify-content: space-between; overflow: hidden; }
.swatches { width: 184px; display: grid; grid-template-columns: repeat(14, 13px); grid-auto-rows: 13px; align-content: start; border-left: 1px solid #222; }
.swatches span { border: solid #333; border-width: 1px 1px 0 0; }
.swatches svg { width: 100%; height: 100%; }
.swscroll { width: 12px; background: #303030; display: flex; flex-direction: column; align-items: center; justify-content: space-between; padding: 4px 0; }
.swscroll span { width: 10px; height: 10px; background: #999; margin-bottom: 6px; }
.swfoot { height: 20px; display: flex; align-items: center; justify-content: space-between; padding-left: 2px; margin-right: -4px; }
.weight { height: 33px; display: flex; align-items: center; padding-left: 5px; border-bottom: 1px solid #222; }
.weight .pair { margin-left: 4px; }
.path { height: 93px; padding: 4px 5px 0 4px; border-bottom: 1px solid #222; }
.path > span { display: block; line-height: 14px; }
.prow { display: flex; align-items: center; height: 30px; padding-left: 5px; }
.prow svg { width: 14px; height: 14px; }
.four { gap: 20px; }
.four .expand { flex: none; width: 65px; margin-left: auto; background: #4c4c4c; border-color: #303030; color: #777; }
.six { justify-content: space-between; padding: 0 8px; }
.floatfoot { height: 8px; display: flex; align-items: center; justify-content: center; }

.dock { flex: none; width: 38px; border-left: 2px solid #222; border-right: 1px solid #222; background: #474747; }
.dock .bar { justify-content: flex-end; padding-right: 4px; }
.dockgroup { height: 91px; display: flex; flex-direction: column; align-items: center; padding-top: 3px; border-bottom: 1px solid #222; }
.dockgroup button { width: 28px; height: 22px; margin-top: 4px; border-radius: 3px; }
.dockgroup .on { background: #2d2d2d; }
```
FILE: script.js
```js
const fill = (id, colors) => {
  const host = document.getElementById(id);
  colors.forEach((c) => {
    const s = document.createElement('span');
    s.style.background = c;
    host.appendChild(s);
  });
  return host;
};

fill('rule', ['#f7931e', '#a85e08', '#2aa80a', '#5490fb', '#a434a8']);

fill('shades', [
  '#000', '#412507', '#7a4a12', '#b96f18', '#f7931e', '#f9a84f', '#fbbc78', '#fdd5a6', '#fee9d0',
  '#000', '#2a1701', '#542f03', '#7e4705', '#a85e08', '#ba7e3a', '#cb9e6b', '#dcbd98', '#eeddcb',
  '#000', '#0b2a03', '#155405', '#207e08', '#2aa80a', '#55ba3b', '#80cb6c', '#aadc9d', '#d5eece',
  '#000', '#152440', '#24447f', '#3e6abb', '#5490fb', '#76a5fb', '#98bcfc', '#bad2fd', '#dde9fe',
  '#000', '#290d2a', '#521a54', '#7b277e', '#a434a8', '#b65dba', '#c886cb', '#dbaedc', '#edd6ee'
]);

const swatches = fill('swatches', [
  '#fff', '#ccc', '#fff', '#000', '#f00', '#ff0', '#0f0', '#0ff', '#00f', '#f0f', '#c1272d', '#ed1c24', '#f15a24', '#f7931e',
  '#fbb03b', '#fcee21', '#d9e021', '#8cc63f', '#39b54a', '#009245', '#006837', '#22b573', '#00a99d', '#29abe2', '#0071bc', '#2e3192', '#1b1464', '#662d91',
  '#93278f', '#9e005d', '#d4145a', '#ed1e79', '#c7b299', '#998675', '#736357', '#534741', '#c69c6d', '#a67c52', '#8c6239', '#754c24', '#603813', '#42210b',
  'linear-gradient(90deg,#fff,#000)', 'linear-gradient(120deg,#fff,#29abe2,#0071bc)', 'repeating-linear-gradient(45deg,#f5b6d4 0 2px,#fff 2px 3px)', 'radial-gradient(#fff,#f7931e)',
  'repeating-linear-gradient(45deg,#ddd 0 2px,#fff 2px 4px)', 'repeating-linear-gradient(60deg,#17649c 0 2px,#bde 2px 4px)', 'repeating-linear-gradient(30deg,#8db66a 0 1px,#eef 1px 3px)',
  '#222', '#eee', '#ddd'
]);
swatches.children[0].innerHTML = '<svg viewBox="0 0 12 12"><rect x="1.500" y="1.500" width="9" height="9" fill="#fff" stroke="#000"/><path d="M2 10L10 2" stroke="#d00" stroke-width="1.500"/></svg>';
swatches.children[1].innerHTML = '<svg viewBox="0 0 12 12"><circle cx="6" cy="6" r="4" fill="none" stroke="#000"/><circle cx="6" cy="6" r="1.500" fill="#000"/><path d="M6 0v12M0 6h12" stroke="#000" stroke-width=".8"/></svg>';
```
